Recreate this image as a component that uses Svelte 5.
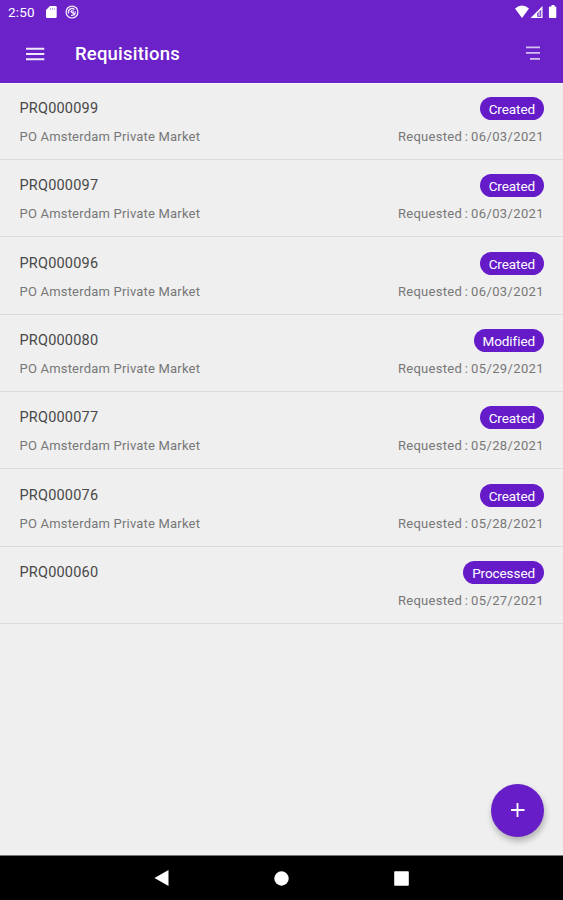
<script lang="ts">

let requisitions = $state([
    { id: 'PRQ000099', site: 'PO Amsterdam Private Market', status: 'Created', date: '06/03/2021' },
    { id: 'PRQ000097', site: 'PO Amsterdam Private Market', status: 'Created', date: '06/03/2021' },
    { id: 'PRQ000096', site: 'PO Amsterdam Private Market', status: 'Created', date: '06/03/2021' },
    { id: 'PRQ000080', site: 'PO Amsterdam Private Market', status: 'Modified', date: '05/29/2021' },
    { id: 'PRQ000077', site: 'PO Amsterdam Private Market', status: 'Created', date: '05/28/2021' },
    { id: 'PRQ000076', site: 'PO Amsterdam Private Market', status: 'Created', date: '05/28/2021' },
    { id: 'PRQ000060', site: '', status: 'Processed', date: '05/27/2021' },
])

</script>

<div class="screen">
    <header>
        <div class="status">
            <span class="time">2:50</span>
            <svg class="card" width="11" height="12" viewBox="0 0 11 12">
                <path fill="#fff" d="M4 0h5.5q1.200 0 1.200 1.200v9.600q0 1.200-1.200 1.200h-8.300Q0 12 0 10.800V4z" />
                <path stroke="#6b22c9" stroke-width=".8" d="M4.500 2v2M6.500 2v2M8.500 2v2" opacity=".5" />
            </svg>
            <svg class="sync" width="14" height="14" viewBox="0 0 14 14" fill="none" stroke="#fff" opacity=".9">
                <circle cx="7" cy="7" r="5.900" stroke-width="1.300" />
                <path stroke-width="1.300" d="M3.800 8.500A3.500 3.500 0 0 1 9.500 4.600M10.300 6.500A3.500 3.500 0 0 1 6 10.200M6 6l4 4" />
                <circle cx="7.300" cy="6.500" r="1.300" stroke-width="1" />
            </svg>
            <svg class="signals" width="43" height="14" viewBox="0 0 43 14" fill="#fff">
                <path d="M1 3.500Q8-2.500 15 3.500L8 13z" />
                <path fill-rule="evenodd" d="M28.500 1v12H16.500zM27.200 4.500v7.200h-4V8.500z" />
                <path d="M24.300 8l2-2.500v5.500h-2z" opacity=".6" />
                <path d="M36 1.500h1.500V0h3v1.500H41.500q.8 0 .8.800V12q0 1-.8 1h-5.800q-.8 0-.8-1V2.300q0-.8 1.100-.8z" />
            </svg>
        </div>
        <div class="bar">
            <button class="menu" aria-label="Menu">
                <svg width="19" height="14" viewBox="0 0 19 14" fill="#fff" opacity=".9">
                    <path d="M0 .7h18.300v2H0zM0 6h18.300v2H0zM0 11.300h18.300v2H0z" />
                </svg>
            </button>
            <h1>Requisitions</h1>
            <button class="filter" aria-label="Filter">
                <svg width="14" height="15" viewBox="0 0 14 15" fill="#fff" opacity=".72">
                    <path d="M0 .5h14v1.700H0zM0 6.100h14v1.700H0zM4 12h10v1.700H4z" />
                </svg>
            </button>
        </div>
    </header>

    <main>
        {#each requisitions as req}
            <div class="item">
                <div class="line">
                    <span class="id">{req.id}</span>
                    <span class="badge">{req.status}</span>
                </div>
                <div class="line sub">
                    <span class="site">{req.site}</span>
                    <span class="date">Requested : <span class="day">{req.date}</span></span>
                </div>
            </div>
        {/each}
        <button class="fab" aria-label="Add">
            <svg width="14" height="14" viewBox="0 0 14 14" stroke="#fff" stroke-width="1.800">
                <path d="M6.500 0v14M0 7h13.500" />
            </svg>
        </button>
    </main>

    <nav>
        <svg width="15" height="16" viewBox="0 0 15 16" fill="#fff"><path d="M14.500 0v16L.5 8z" /></svg>
        <svg width="15" height="15" viewBox="0 0 15 15" fill="#fff"><circle cx="7.500" cy="7.500" r="7.200" /></svg>
        <svg width="15" height="15" viewBox="0 0 15 15" fill="#fff"><rect x=".2" y=".2" width="14.600" height="14.600" rx=".8" /></svg>
    </nav>
</div>

<style>
:global(body) {
    background: #efefef;
}

.screen {
    height: 900px;
    display: flex;
    flex-direction: column;
    font-family: Roboto, sans-serif;
    overflow: hidden;
}

button {
    all: unset;
    display: grid;
    place-content: center;
}

svg {
    display: block;
}

header {
    height: 82.5px;
    flex: none;
    background: #6b22c9;
    color: white;
}

.status {
    height: 24px;
    display: flex;
    align-items: center;
    padding: 0 6px 0 8px;
}

.time {
    width: 38px;
    font-size: 13.5px;
    font-weight: 400;
    letter-spacing: 0.2px;
}

.sync {
    margin-left: 8px;
}

.signals {
    margin-left: auto;
    margin-top: -1px;
}

.bar {
    height: 59px;
    display: flex;
    align-items: center;
    padding: 0 23px 0 26px;
}

.menu {
    width: 19px;
    margin-right: 30px;
}

h1 {
    flex-grow: 1;
    margin: 1px 0 0;
    font-size: 18.5px;
    font-weight: 500;
    letter-spacing: 0.2px;
}

main {
    position: relative;
    flex: 1;
    box-shadow: inset 0 1px 0 #f8f7fa;
}

.item {
    box-sizing: border-box;
    height: 77.35px;
    padding: 14.5px 19px 0;
    border-bottom: 1px solid #dadada;
}

.line {
    height: 23px;
    display: flex;
    justify-content: space-between;
    align-items: center;
}

.sub {
    height: 18px;
    margin-top: 7.5px;
    font-size: 13px;
    color: #777;
}

.id {
    font-size: 14.5px;
    letter-spacing: 0.2px;
    color: #484848;
    margin-left: 0.5px;
}

.site {
    margin-left: 0.5px;
    letter-spacing: 0.2px;
}

.date {
    letter-spacing: 0.3px;
    word-spacing: -0.8px;
}

.day {
    letter-spacing: 0.38px;
}

.badge {
    box-sizing: border-box;
    height: 23px;
    padding: 1px 9px 0;
    border-radius: 12px;
    background: #651bc8;
    color: white;
    font-size: 13.5px;
    line-height: 22px;
    letter-spacing: -0.08px;
}

.fab {
    position: absolute;
    right: 19px;
    bottom: 18.5px;
    width: 53px;
    height: 53px;
    border-radius: 50%;
    background: #671dc8;
    box-shadow: 1px 4px 6px #0004;
}

nav {
    box-sizing: border-box;
    height: 45px;
    flex: none;
    display: flex;
    justify-content: center;
    align-items: center;
    gap: 105px;
    background: black;
    border-top: 1px solid #777;
}
</style>
